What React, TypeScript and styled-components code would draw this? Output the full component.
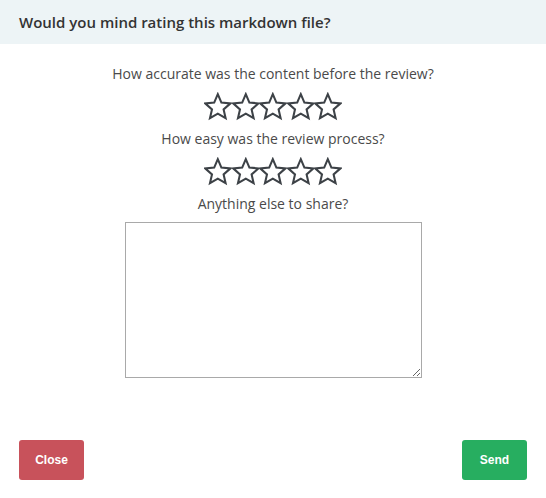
import React from "react";
import styled, { createGlobalStyle } from "styled-components";

const Global = createGlobalStyle`
  html, body { margin: 0; padding: 0; background: #fff; }
  body { font-family: "Open Sans", "Noto Sans", sans-serif; color: #444; }
`;

const Modal = styled.div`
  width: 546px;
  height: 498px;
  display: flex;
  flex-direction: column;
  background: #fff;
`;

const Header = styled.div`
  height: 44px;
  background: #edf4f6;
  display: flex;
  align-items: center;
  padding: 0 19px;
  box-sizing: border-box;
`;

const Title = styled.h4`
  margin: 0;
  font-size: 15px;
  font-weight: 600;
  color: #333;
`;

const Body = styled.div`
  display: flex;
  flex-direction: column;
  align-items: center;
  padding-top: 19px;
  flex: 1;
`;

const Question = styled.div`
  font-size: 14px;
  line-height: 22px;
  color: #4a4a4a;
`;

const Stars = styled.div`
  display: flex;
  height: 43px;
  align-items: center;
`;

const Textarea = styled.textarea`
  width: 297px;
  height: 156px;
  box-sizing: border-box;
  border: 1px solid #a9a9a9;
  margin-top: 7px;
  resize: both;
  font-family: inherit;
`;

const Footer = styled.div`
  display: flex;
  justify-content: space-between;
  padding: 0 19px 18px;
`;

const Button = styled.button<{ $variant: "close" | "send" }>`
  width: 65px;
  height: 40px;
  border: none;
  border-radius: 3px;
  color: #fff;
  font-family: "Liberation Sans", Arial, sans-serif;
  font-weight: bold;
  font-size: 12px;
  background: ${(p) => (p.$variant === "close" ? "#c8525b" : "#27ae60")};
`;

const Star = () => (
  <svg width="27.6" height="29" viewBox="0 0 28 29">
    <polygon
      points="14,2 17.65,10.48 26.84,11.33 19.9,17.42 21.94,26.42 14,21.7 6.06,26.42 8.1,17.42 1.16,11.33 10.35,10.48"
      fill="none"
      stroke="#3d4247"
      strokeWidth="2.1"
      strokeLinejoin="miter"
    />
  </svg>
);

const StarRow = () => (
  <Stars>
    {[0, 1, 2, 3, 4].map((i) => (
      <Star key={i} />
    ))}
  </Stars>
);

export default function App() {
  return (
    <Modal>
      <Global />
      <Header>
        <Title>Would you mind rating this markdown file?</Title>
      </Header>
      <Body>
        <Question>How accurate was the content before the review?</Question>
        <StarRow />
        <Question>How easy was the review process?</Question>
        <StarRow />
        <Question>Anything else to share?</Question>
        <Textarea />
      </Body>
      <Footer>
        <Button $variant="close">Close</Button>
        <Button $variant="send">Send</Button>
      </Footer>
    </Modal>
  );
}
